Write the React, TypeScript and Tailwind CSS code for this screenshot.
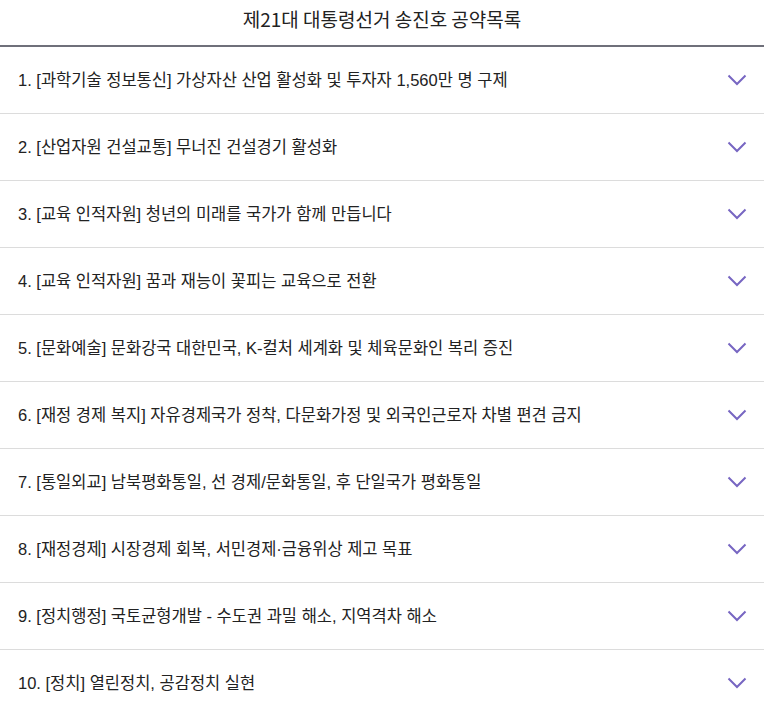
import React from 'react';

const pledges = [
  '1. [과학기술 정보통신] 가상자산 산업 활성화 및 투자자 1,560만 명 구제',
  '2. [산업자원 건설교통] 무너진 건설경기 활성화',
  '3. [교육 인적자원] 청년의 미래를 국가가 함께 만듭니다',
  '4. [교육 인적자원] 꿈과 재능이 꽃피는 교육으로 전환',
  '5. [문화예술] 문화강국 대한민국, K-컬처 세계화 및 체육문화인 복리 증진',
  '6. [재정 경제 복지] 자유경제국가 정착, 다문화가정 및 외국인근로자 차별 편견 금지',
  '7. [통일외교] 남북평화통일, 선 경제/문화통일, 후 단일국가 평화통일',
  '8. [재정경제] 시장경제 회복, 서민경제·금융위상 제고 목표',
  '9. [정치행정] 국토균형개발 - 수도권 과밀 해소, 지역격차 해소',
  '10. [정치] 열린정치, 공감정치 실현',
];

const Chevron = () => (
  <svg width="20" height="12" viewBox="0 0 20 12" fill="none" className="shrink-0">
    <path d="M1.5 1.5 L10 10 L18.5 1.5" stroke="#7766c2" strokeWidth="2" />
  </svg>
);

export default function App() {
  return (
    <div
      className="w-[764px] h-[714px] overflow-hidden bg-white text-[#222]"
      style={{ fontFamily: '"Liberation Sans", "Noto Sans CJK KR", sans-serif' }}
    >
      <div className="h-[47px] flex items-center justify-center border-b-2 border-[#6f707a]">
        <h1
          className="text-[19px] leading-none text-[#222] mb-[8px]"
          style={{ fontFamily: '"Noto Sans CJK KR", sans-serif' }}
        >
          제21대 대통령선거 송진호 공약목록
        </h1>
      </div>
      <ul>
        {pledges.map((p) => (
          <li key={p} className="h-[67px] flex items-center justify-between pl-[18px] pr-[17px] border-b border-[#dcdcdc]">
            <span className="text-[16.5px]">{p}</span>
            <Chevron />
          </li>
        ))}
      </ul>
    </div>
  );
}
